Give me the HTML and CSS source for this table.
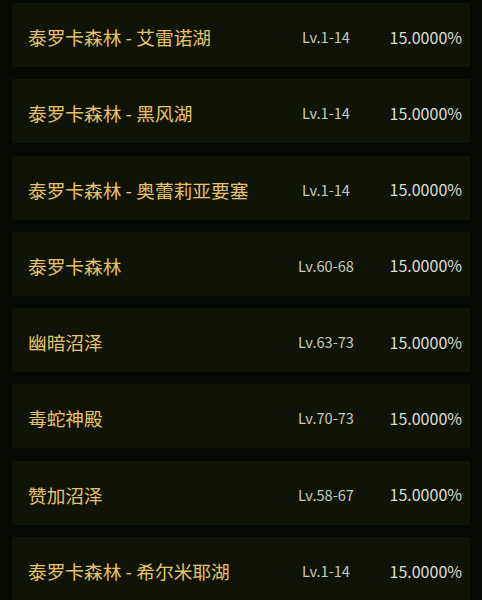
FILE: index.html
```html
<!DOCTYPE html>
<html lang="zh">
<head>
<meta charset="utf-8">
<link rel="stylesheet" href="styles.css">
</head>
<body>
<div class="list">
  <div class="row"><span class="name">泰罗卡森林 - 艾雷诺湖</span><span class="lv">Lv.1-14</span><span class="pct">15.0000%</span></div>
  <div class="row"><span class="name">泰罗卡森林 - 黑风湖</span><span class="lv">Lv.1-14</span><span class="pct">15.0000%</span></div>
  <div class="row"><span class="name">泰罗卡森林 - 奥蕾莉亚要塞</span><span class="lv">Lv.1-14</span><span class="pct">15.0000%</span></div>
  <div class="row"><span class="name">泰罗卡森林</span><span class="lv">Lv.60-68</span><span class="pct">15.0000%</span></div>
  <div class="row"><span class="name">幽暗沼泽</span><span class="lv">Lv.63-73</span><span class="pct">15.0000%</span></div>
  <div class="row"><span class="name">毒蛇神殿</span><span class="lv">Lv.70-73</span><span class="pct">15.0000%</span></div>
  <div class="row"><span class="name">赞加沼泽</span><span class="lv">Lv.58-67</span><span class="pct">15.0000%</span></div>
  <div class="row"><span class="name">泰罗卡森林 - 希尔米耶湖</span><span class="lv">Lv.1-14</span><span class="pct">15.0000%</span></div>
</div>
</body>
</html>
```
FILE: styles.css
```css
html, body {
  margin: 0;
  padding: 0;
  background: #050a03;
  overflow: hidden;
}
body {
  font-family: "Noto Sans CJK SC", "Noto Sans", sans-serif;
}
.list {
  display: flex;
  flex-direction: column;
  gap: 12.3px;
  padding: 3px 12px 0 12px;
}
.row {
  display: flex;
  align-items: center;
  height: 64px;
  padding: 3px 8px 0 16px;
  box-sizing: border-box;
  background: #0f1407;
}
.name {
  flex: 1;
  color: #e6c36a;
  font-size: 18.7px;
  white-space: nowrap;
}
.lv {
  width: 80px;
  text-align: center;
  color: #c9cabb;
  font-size: 14.6px;
}
.pct {
  width: 96px;
  text-align: right;
  color: #dcdcd2;
  font-size: 16px;
}
```
